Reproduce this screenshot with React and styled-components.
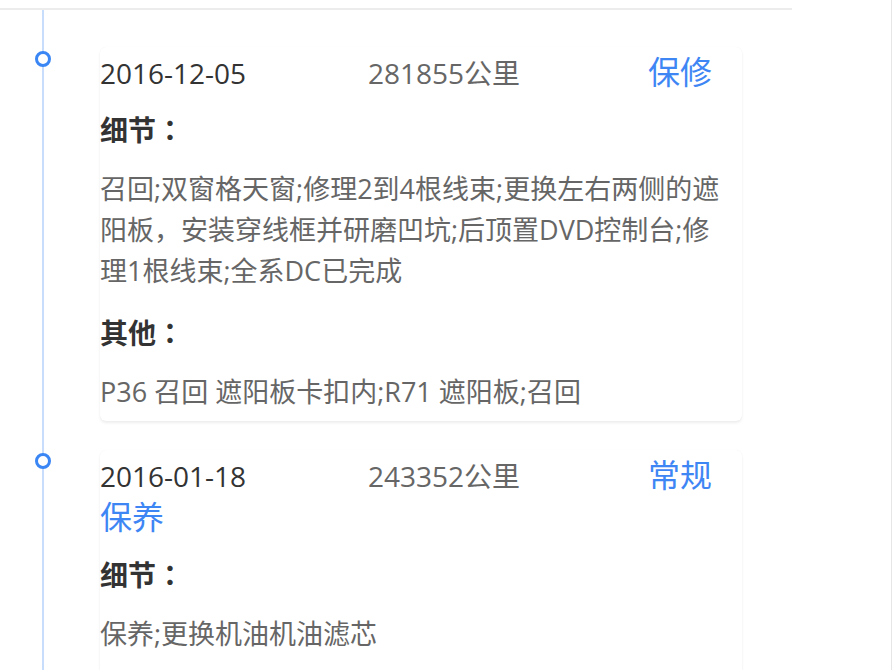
import React from "react";
import styled, { createGlobalStyle } from "styled-components";

const GlobalStyle = createGlobalStyle`
  html, body { margin: 0; padding: 0; background: #ffffff; }
  body { font-family: "Open Sans", "Noto Sans CJK SC", sans-serif; }
  * { box-sizing: border-box; }
`;

const Page = styled.div`
  width: 892px;
  min-height: 100vh;
  padding-top: 8px;
  border-right: 1px solid #e6e6e6;
  overflow: hidden;
`;

const Frame = styled.div`
  width: 792px;
  min-height: 700px;
  border-top: 2px solid #ececec;
`;

const Timeline = styled.div`
  margin-left: 42px;
  min-height: 700px;
  border-left: 2px solid #c8dcfb;
  padding: 37px 0 0 56px;
  display: flex;
  flex-direction: column;
  gap: 29px;
`;

const Item = styled.div`
  position: relative;
  width: 642px;
`;

const Dot = styled.span`
  position: absolute;
  left: -65px;
  top: ${(p) => p.$top}px;
  width: 16px;
  height: 16px;
  border-radius: 50%;
  border: 3px solid #3a86f4;
  background: #ffffff;
`;

const Card = styled.div`
  display: flex;
  flex-direction: column;
  background: #ffffff;
  border-radius: 6px;
  box-shadow: 0 2px 3px rgba(0, 0, 0, 0.07), 0 0 1px rgba(0, 0, 0, 0.05);
  padding: 5px 0 3px 0;
`;

const Header = styled.div`
  font-size: 28px;
  line-height: 42px;
`;

const DateText = styled.span`
  display: inline-block;
  width: 268px;
  color: #333333;
`;

const Km = styled.span`
  display: inline-block;
  width: 280px;
  color: #666666;
`;

const Type = styled.span`
  font-size: 32px;
  line-height: 1;
  color: #3f86f5;
`;

const Heading = styled.div`
  margin-top: 15px;
  font-family: "Open Sans", "Noto Sans CJK TC", sans-serif;
  font-size: 28px;
  line-height: 42px;
  font-weight: 700;
  color: #333333;
`;

const Body = styled.div`
  margin-top: 17px;
  margin-bottom: 6px;
  max-width: 628px;
  font-size: 27px;
  line-height: 41px;
  color: #666666;
`;

const records = [
  {
    date: "2016-12-05",
    km: "281855公里",
    type: "保修",
    detail:
      "召回;双窗格天窗;修理2到4根线束;更换左右两侧的遮阳板，安装穿线框并研磨凹坑;后顶置DVD控制台;修理1根线束;全系DC已完成",
    other: "P36 召回 遮阳板卡扣内;R71 遮阳板;召回",
  },
  {
    date: "2016-01-18",
    km: "243352公里",
    type: "常规保养",
    detail: "保养;更换机油机油滤芯",
    other: "无",
  },
];

export default function App() {
  return (
    <>
      <GlobalStyle />
      <Page>
        <Frame>
          <Timeline>
            {records.map((r, i) => (
              <Item key={i}>
                <Dot $top={i === 0 ? 4 : 3} />
                <Card>
                  <Header>
                    <DateText>{r.date}</DateText>
                    <Km>{r.km}</Km>
                    <Type>{r.type}</Type>
                  </Header>
                  <Heading>细节：</Heading>
                  <Body>{r.detail}</Body>
                  <Heading>其他：</Heading>
                  <Body>{r.other}</Body>
                </Card>
              </Item>
            ))}
          </Timeline>
        </Frame>
      </Page>
    </>
  );
}
